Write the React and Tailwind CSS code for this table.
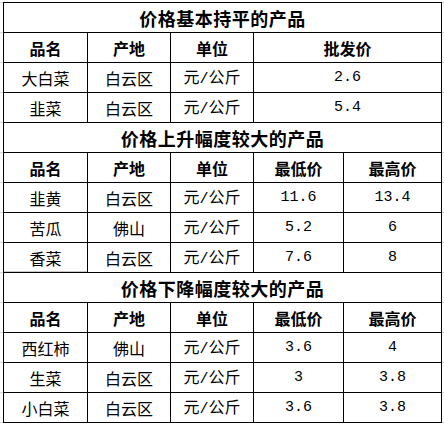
import React from "react";

const CJK = "font-['Noto_Sans_CJK_SC',sans-serif]";
const NUM = "font-['Liberation_Mono','Noto_Sans_CJK_SC',monospace] text-[15px]";

const td = "border border-black text-center align-middle p-0";

function Title({ children }) {
  return (
    <tr className="h-[30px]">
      <td colSpan={5} className={`${td} text-[18px] font-bold tracking-[0.5px]`}>
        {children}
      </td>
    </tr>
  );
}

function Head({ cols }) {
  return (
    <tr className="h-[30px]">
      {cols.map((c, i) => (
        <td
          key={i}
          colSpan={c.span || 1}
          className={`${td} text-[16px] font-bold`}
        >
          {c.t}
        </td>
      ))}
    </tr>
  );
}

function Row({ name, place, vals, grayBottomFirst }) {
  return (
    <tr className="h-[30px]">
      <td
        className={`${td} text-[16px] ${
          grayBottomFirst ? "border-b-hidden shadow-[inset_0_-1px_0_#c8c8c8]" : ""
        }`}
      >
        {name}
      </td>
      <td className={`${td} text-[16px]`}>{place}</td>
      <td className={`${td} text-[16px]`}>
        元<span className="font-['Liberation_Mono',monospace] text-[15px]">/</span>公斤
      </td>
      {vals.length === 1 ? (
        <td colSpan={2} className={`${td} ${NUM}`}>
          {vals[0]}
        </td>
      ) : (
        <>
          <td className={`${td} ${NUM}`}>{vals[0]}</td>
          <td className={`${td} ${NUM}`}>{vals[1]}</td>
        </>
      )}
    </tr>
  );
}

export default function App() {
  const h5 = [
    { t: "品名" },
    { t: "产地" },
    { t: "单位" },
    { t: "最低价" },
    { t: "最高价" },
  ];
  return (
    <div
      className={`w-[444px] h-[426px] bg-white pl-[3px] pt-[2px] text-black ${CJK} bg-[linear-gradient(#d4d4d4_1px,transparent_1px)] bg-[size:100%_30px] bg-[position:0_2px]`}
    >
      <table className="border-collapse table-fixed w-[438px] bg-white leading-none">
        <colgroup>
          <col className="w-[84px]" />
          <col className="w-[83px]" />
          <col className="w-[83px]" />
          <col className="w-[90px]" />
          <col className="w-[98px]" />
        </colgroup>
        <tbody>
          <Title>价格基本持平的产品</Title>
          <Head
            cols={[
              { t: "品名" },
              { t: "产地" },
              { t: "单位" },
              { t: "批发价", span: 2 },
            ]}
          />
          <Row name="大白菜" place="白云区" vals={["2.6"]} />
          <Row name="韭菜" place="白云区" vals={["5.4"]} />
          <Title>价格上升幅度较大的产品</Title>
          <Head cols={h5} />
          <Row name="韭黄" place="白云区" vals={["11.6", "13.4"]} />
          <Row name="苦瓜" place="佛山" vals={["5.2", "6"]} />
          <Row name="香菜" place="白云区" vals={["7.6", "8"]} grayBottomFirst />
          <Title>价格下降幅度较大的产品</Title>
          <Head cols={h5} />
          <Row name="西红柿" place="佛山" vals={["3.6", "4"]} />
          <Row name="生菜" place="白云区" vals={["3", "3.8"]} />
          <Row name="小白菜" place="白云区" vals={["3.6", "3.8"]} />
        </tbody>
      </table>
    </div>
  );
}
